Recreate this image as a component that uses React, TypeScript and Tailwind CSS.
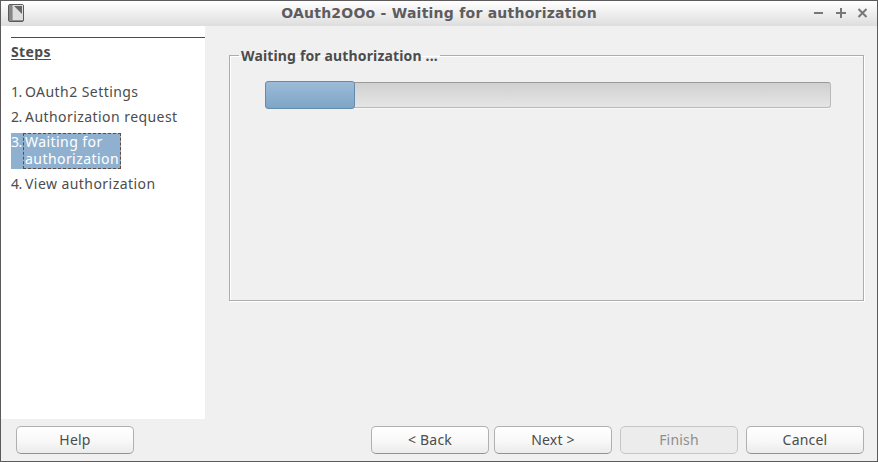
import type { ReactNode } from "react";

function Button({ children, disabled = false, className = "" }: { children: ReactNode; disabled?: boolean; className?: string }) {
  return (
    <button
      disabled={disabled}
      className={`flex h-7 w-[118px] shrink-0 items-center justify-center rounded-[5px] border text-[14px] leading-5 tracking-[0.2px] ${
        disabled
          ? "border-[#c6c6c6] bg-[#ececec] text-[#8e8e8e]"
          : "border-[#b0b0b0] border-b-[#929292] bg-linear-to-b from-white via-[#f9f9f9] to-[#ebebeb] text-[#4c4c4c]"
      } ${className}`}
    >
      {children}
    </button>
  );
}

function Step({ n, children }: { n: number; children: ReactNode }) {
  return (
    <li className="flex h-[25px] leading-[17px] whitespace-nowrap">
      <span className="w-[14px] shrink-0 tracking-[-0.6px]">{n}.</span>
      <span className="tracking-[0.44px]">{children}</span>
    </li>
  );
}

export default function App() {
  return (
    <div className="flex h-[462px] w-[878px] flex-col overflow-hidden border border-[#5c5a5c] bg-[#f0f0f0] font-['Noto_Sans',sans-serif] text-[14px] text-[#4c4c4c]">
      <header className="flex h-[25px] shrink-0 items-center bg-linear-to-b from-white to-[#dedede] pr-[9px] pl-[7px]">
        <svg width="16" height="18" viewBox="0 0 16 18" className="-mt-px shrink-0">
          <rect x="0.5" y="0.5" width="15" height="17" rx="1.5" fill="#8f8f8f" stroke="#5a5a5a" />
          <rect x="1" y="1" width="3" height="15" fill="#868686" />
          <rect x="4" y="1" width="1" height="15" fill="#a8a8a8" />
          <path d="M5 1h10v15H5z" fill="#dedede" />
          <path d="M6 2h8v8z" fill="#666" />
        </svg>
        <h1 className="-mt-[2px] flex-1 pl-[42px] text-center font-['DejaVu_Sans',sans-serif] text-[14px] leading-5 font-bold tracking-[0.24px] whitespace-nowrap text-[#5e5c5e]">
          OAuth2OOo - Waiting for authorization
        </h1>
        <svg width="56" height="12" viewBox="0 0 56 12" className="-mt-px shrink-0" fill="none" stroke="#777" strokeWidth="2">
          <path d="M2 6h9M24 6h10M29 1v10" />
          <path d="m46.5 2 8 8m0-8-8 8" />
        </svg>
      </header>
      <div className="flex h-[393px] shrink-0">
        <aside className="w-[204px] shrink-0 bg-white pt-[11px] pl-[10px]">
          <div className="h-px bg-[#4c4c4c]" />
          <h2 className="mt-[5px] w-fit leading-[17px] font-bold tracking-[0.4px] underline decoration-1 underline-offset-2">Steps</h2>
          <ol className="mt-[23px]">
            <Step n={1}>OAuth2 Settings</Step>
            <Step n={2}>Authorization request</Step>
            <li className="mb-[6px] flex h-9 w-[110px] bg-[#8fb1cf] leading-[17px] text-white">
              <span className="w-[12px] shrink-0 tracking-[-0.6px]">3.</span>
              <div className="flex-1 border border-dashed border-[#654b3d] pl-px tracking-[0.44px] whitespace-nowrap">
                <div className="-mt-px">
                  Waiting for
                  <br />
                  authorization
                </div>
              </div>
            </li>
            <Step n={4}>View authorization</Step>
          </ol>
        </aside>
        <main className="flex-1 pt-[20px] pr-[13px] pl-[24px]">
          <fieldset className="h-[255px] border border-[#adadad] pr-[32px] pl-[35px] shadow-[1px_1px_0_#fff,inset_1px_1px_0_#fff]">
            <legend className="-ml-[26px] h-[19px] px-[2px] leading-[19px] font-bold tracking-[0.15px] whitespace-nowrap">
              Waiting for authorization ...
            </legend>
            <div className="mt-[17px] h-[26px] rounded-[3px] border border-[#b9b9b9] border-t-[#999] bg-linear-to-b from-[#d0d0d0] to-[#e5e5e5] shadow-[0_1px_0_#f8f8f8]">
              <div className="-mt-[2px] -ml-px h-7 w-[90px] rounded-[3px] border border-[#638bac] bg-linear-to-b from-[#9cbbd8] to-[#7fa5c5]" />
            </div>
          </fieldset>
        </main>
      </div>
      <footer className="flex pt-[7px] pl-[15px]">
        <Button>Help</Button>
        <Button className="ml-[237px]">&lt; Back</Button>
        <Button className="ml-[5px]">Next &gt;</Button>
        <Button className="ml-[8px]" disabled>Finish</Button>
        <Button className="ml-[8px]">Cancel</Button>
      </footer>
    </div>
  );
}
